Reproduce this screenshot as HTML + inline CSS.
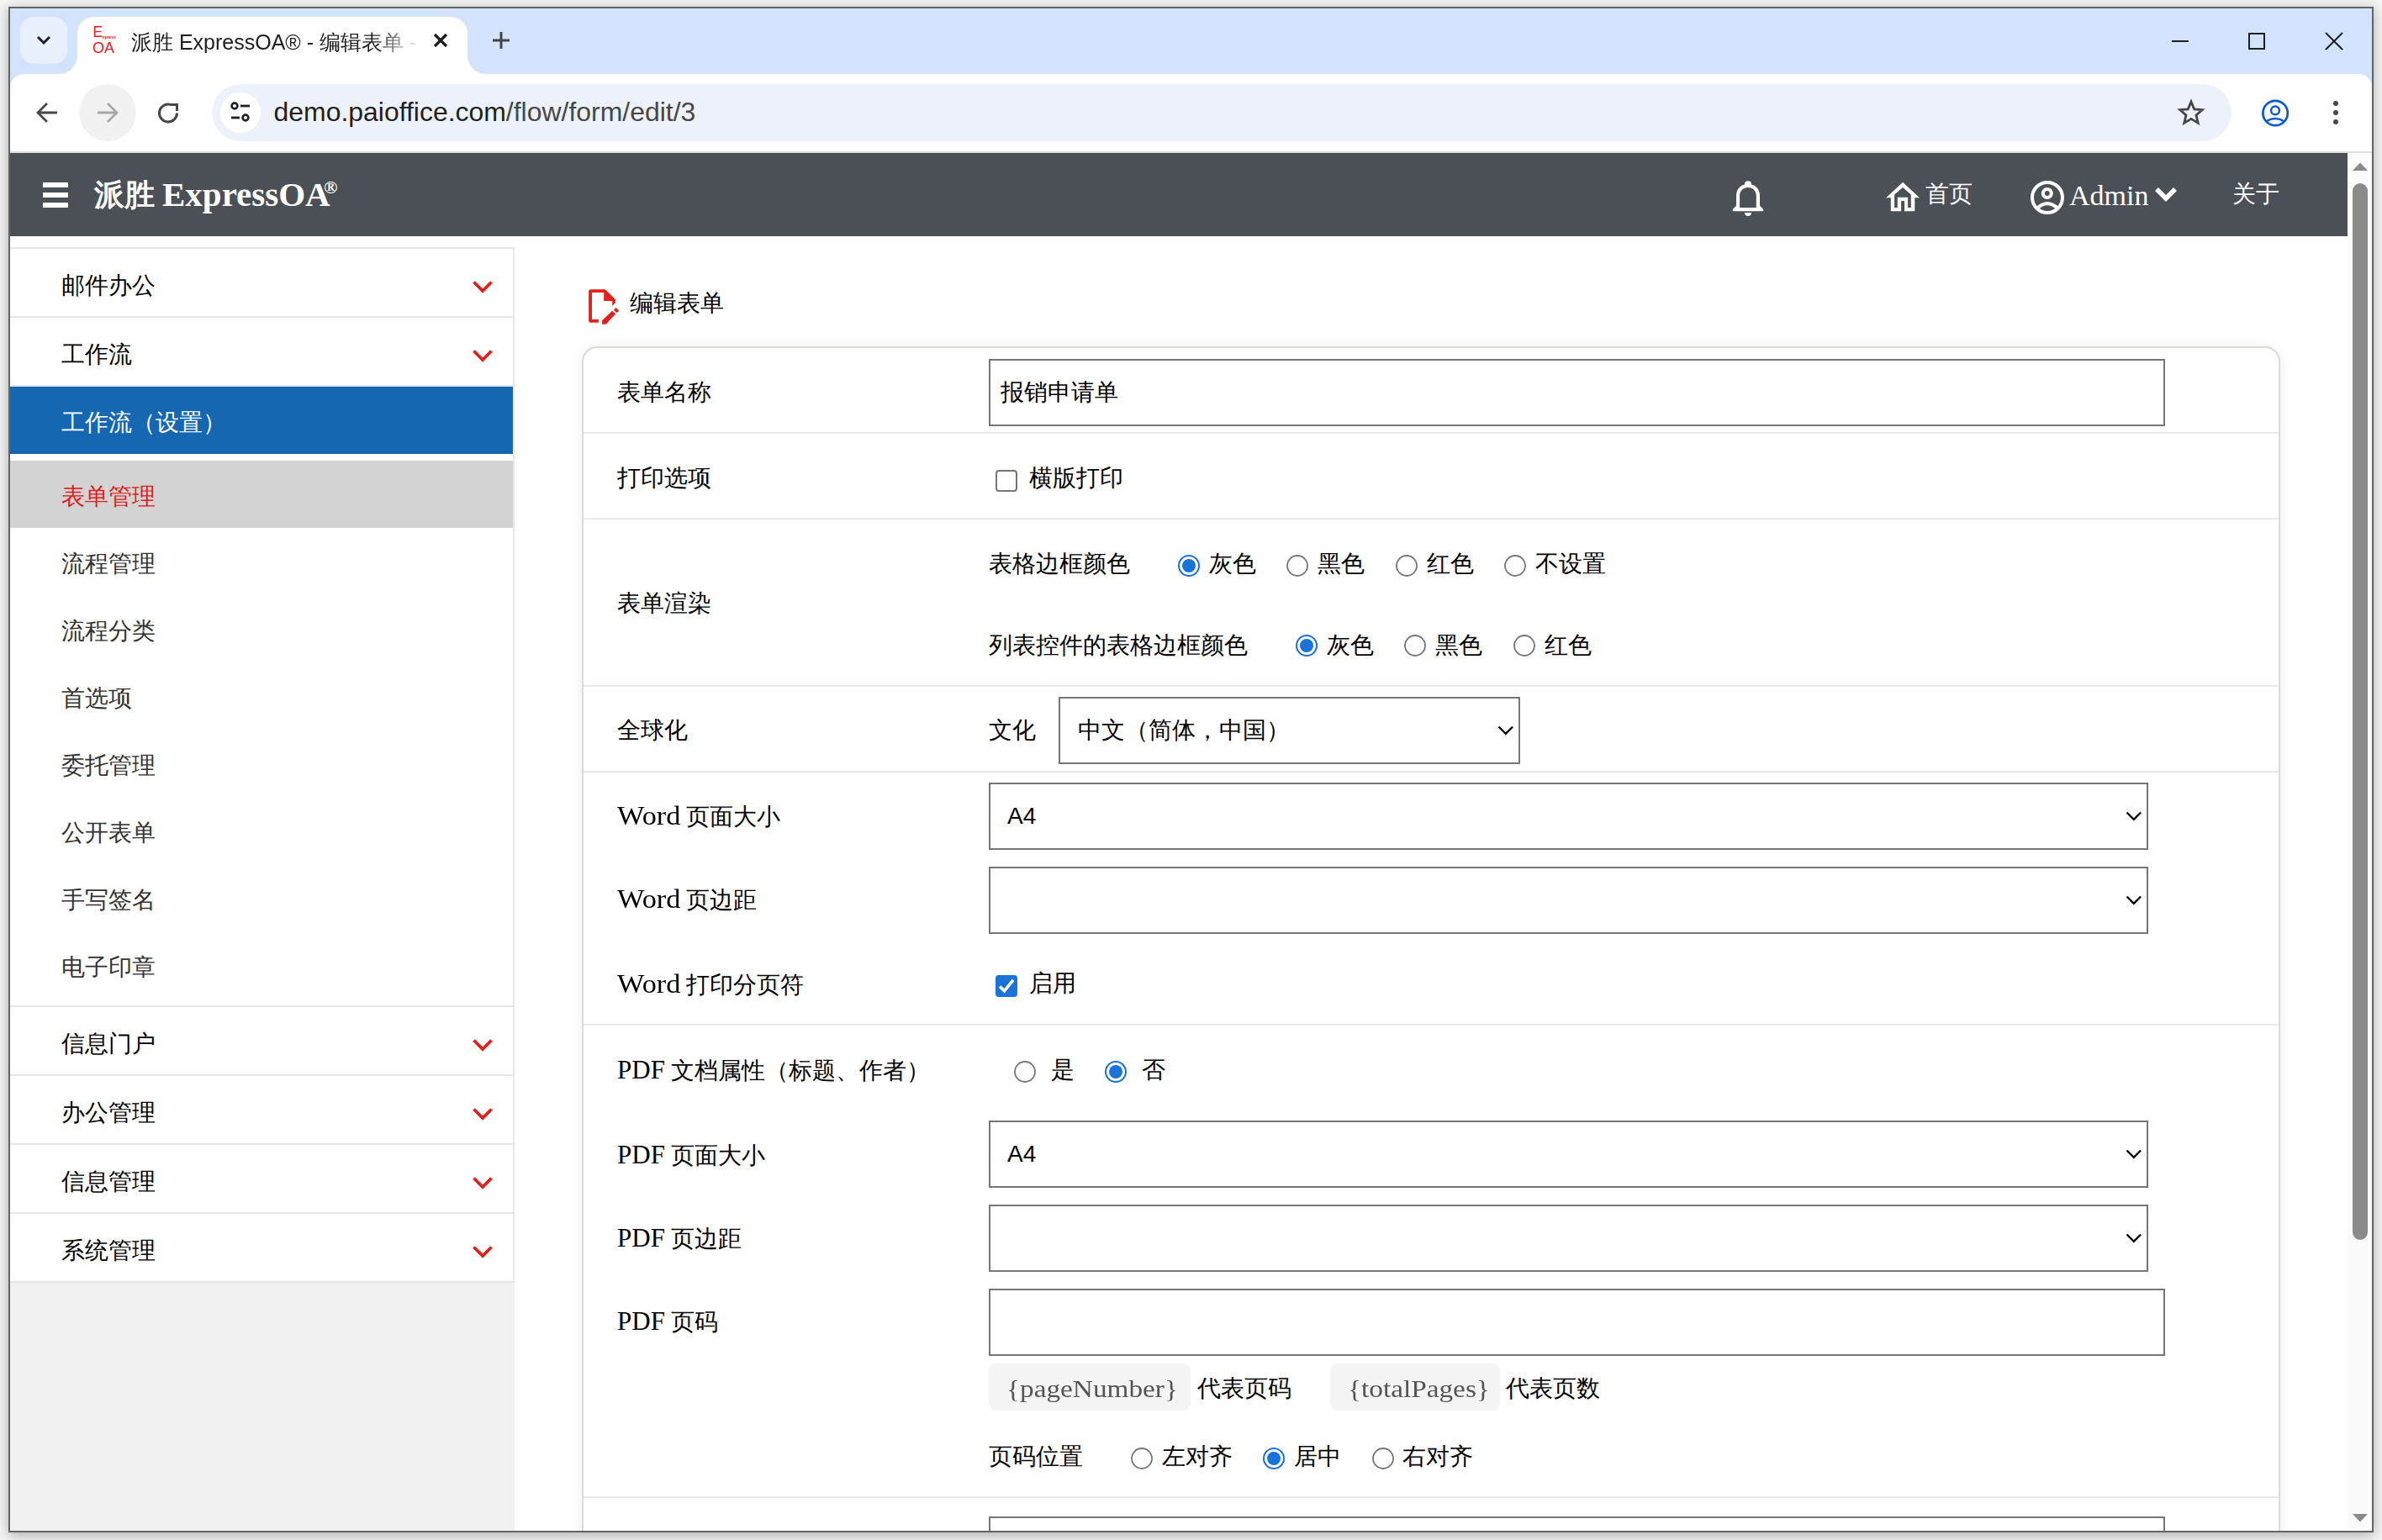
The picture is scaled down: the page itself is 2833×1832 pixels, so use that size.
<!DOCTYPE html>
<html><head><meta charset="utf-8"><title>派胜 ExpressOA® - 编辑表单</title>
<style>
html,body{margin:0;padding:0;}
body{width:2833px;height:1832px;overflow:hidden;position:relative;background:#f4f4f4;font-family:'Liberation Serif', serif;}
.r{position:absolute;box-sizing:border-box;}
.t{position:absolute;white-space:nowrap;}
.lw{font-size:31px;display:inline-block;transform:scaleX(1.108);transform-origin:0 0;margin-right:7px;}
</style></head><body>

<div class="r" style="left:10px;top:8px;width:2813px;height:1815px;border:2px solid #646464;background:#fff;box-shadow:0 3px 14px rgba(0,0,0,0.30);"></div>
<div class="r" style="left:12px;top:10px;width:2809px;height:100px;background:#d3e3fd;"></div>
<div class="r" style="left:24px;top:20px;width:56px;height:56px;background:#e9f0fd;border-radius:16px;"></div>
<svg class="r" style="left:40px;top:38px;" width="24" height="20" viewBox="0 0 24 20"><path d="M5 6 L12 13 L19 6" fill="none" stroke="#1f1f1f" stroke-width="3"/></svg>
<div class="r" style="left:92px;top:20px;width:464px;height:68px;background:#fff;border-radius:20px 20px 0 0;"></div>
<div class="r" style="left:70px;top:66px;width:22px;height:22px;background:radial-gradient(circle at 0 0, transparent 21.5px, #fff 22.5px);"></div>
<div class="r" style="left:556px;top:66px;width:22px;height:22px;background:radial-gradient(circle at 100% 0, transparent 21.5px, #fff 22.5px);"></div>
<div class="t" style="left:110.5px;top:30.4px;font-size:17.5px;line-height:17.5px;color:#e82020;font-family:'Liberation Sans', sans-serif;">E</div>
<div class="t" style="left:122px;top:41.5px;font-size:5px;line-height:5px;color:#e82020;font-family:'Liberation Sans', sans-serif;font-weight:bold;">xpress</div>
<div class="t" style="left:110px;top:47.7px;font-size:18px;line-height:18px;color:#e82020;font-family:'Liberation Sans', sans-serif;">OA</div>
<div class="t" style="left:156px;top:37.5px;font-size:25px;line-height:25px;color:#1f1f1f;font-family:'Liberation Sans', sans-serif;width:345px;overflow:hidden;-webkit-mask-image:linear-gradient(90deg,#000 0,#000 290px,rgba(0,0,0,0.15) 335px,transparent 345px);">派胜 ExpressOA® - 编辑表单 - 派胜</div>
<svg class="r" style="left:513px;top:37px;" width="22" height="22" viewBox="0 0 22 22"><path d="M4 4 L18 18 M18 4 L4 18" stroke="#1f1f1f" stroke-width="3.2"/></svg>
<svg class="r" style="left:585px;top:37px;" width="22" height="22" viewBox="0 0 22 22"><path d="M11 1 V21 M1 11 H21" stroke="#444" stroke-width="3"/></svg>
<div class="r" style="left:2583px;top:48px;width:20px;height:2px;background:#1f1f1f;"></div>
<div class="r" style="left:2674px;top:39px;width:20px;height:20px;border:2px solid #1f1f1f;"></div>
<svg class="r" style="left:2764px;top:37px;" width="24" height="24" viewBox="0 0 24 24"><path d="M2.5 2.5 L21.5 21.5 M21.5 2.5 L2.5 21.5" stroke="#1f1f1f" stroke-width="2" stroke-linecap="round"/></svg>
<div class="r" style="left:12px;top:88px;width:2809px;height:94px;background:#fff;border-radius:16px 16px 0 0;"></div>
<div class="r" style="left:12px;top:180px;width:2809px;height:2px;background:#dfe0dd;"></div>
<svg class="r" style="left:42px;top:120px;" width="28" height="28" viewBox="0 0 28 28"><path d="M26 14 H4 M14 3 L3 14 L14 25" fill="none" stroke="#474747" stroke-width="2.8"/></svg>
<div class="r" style="left:94px;top:100px;width:68px;height:68px;background:#f1f1f1;border-radius:50%;"></div>
<svg class="r" style="left:114px;top:120px;" width="28" height="28" viewBox="0 0 28 28"><path d="M2 14 H24 M14 3 L25 14 L14 25" fill="none" stroke="#a8a8a8" stroke-width="2.8"/></svg>
<svg class="r" style="left:186px;top:120px;" width="28" height="28" viewBox="0 0 28 28"><path d="M24.5 14.5 A10.5 10.5 0 1 1 15.8 4.2" fill="none" stroke="#474747" stroke-width="3"/><path d="M15.5 4.5 H24.5 V12" fill="none" stroke="#474747" stroke-width="3"/></svg>
<div class="r" style="left:252px;top:100px;width:2402px;height:68px;background:#edf2fa;border-radius:34px;"></div>
<div class="r" style="left:262px;top:110px;width:48px;height:48px;background:#fff;border-radius:50%;"></div>
<svg class="r" style="left:270px;top:118px;" width="32" height="32" viewBox="0 0 32 32"><circle cx="9" cy="8" r="3.4" fill="none" stroke="#1f1f1f" stroke-width="2.6"/><path d="M16 8 H27" stroke="#1f1f1f" stroke-width="2.8"/><circle cx="22" cy="22" r="3.4" fill="none" stroke="#1f1f1f" stroke-width="2.6"/><path d="M5 22 H15" stroke="#1f1f1f" stroke-width="2.8"/></svg>
<div class="t" style="left:325.5px;top:115px;font-size:31.95px;line-height:36px;font-family:'Liberation Sans', sans-serif;color:#1f1f1f;">demo.paioffice.com<span style="color:#474747">/flow/form/edit/3</span></div>
<svg class="r" style="left:2588px;top:117px;" width="36" height="34" viewBox="0 0 36 34"><path d="M18.00 4.00 L21.70 12.90 L31.31 13.67 L23.99 19.95 L26.23 29.33 L18.00 24.30 L9.77 29.33 L12.01 19.95 L4.69 13.67 L14.30 12.90 Z" fill="none" stroke="#474747" stroke-width="2.8" stroke-linejoin="miter" stroke-miterlimit="10"/></svg>
<svg class="r" style="left:2687px;top:115.5px;" width="38" height="38" viewBox="0 0 38 38"><circle cx="19.1" cy="18.5" r="14.7" fill="none" stroke="#0b57d0" stroke-width="2.7"/><circle cx="19" cy="15.4" r="4.9" fill="none" stroke="#0b57d0" stroke-width="2.4"/><path d="M8 28.5 Q19 21.5 30 28.5" fill="none" stroke="#0b57d0" stroke-width="2.6"/></svg>
<div class="r" style="left:2775px;top:120px;width:6px;height:6px;background:#474747;border-radius:50%;"></div>
<div class="r" style="left:2775px;top:131px;width:6px;height:6px;background:#474747;border-radius:50%;"></div>
<div class="r" style="left:2775px;top:142px;width:6px;height:6px;background:#474747;border-radius:50%;"></div>
<div style="position:absolute;left:0;top:0;width:2821px;height:1821px;overflow:hidden">
<div class="r" style="left:12px;top:182px;width:2780px;height:1639px;background:#fff;"></div>
<div class="r" style="left:12px;top:182px;width:2780px;height:99px;background:#4b5056;"></div>
<div class="r" style="left:51px;top:217px;width:30px;height:6px;background:#fff;"></div>
<div class="r" style="left:51px;top:229px;width:30px;height:6px;background:#fff;"></div>
<div class="r" style="left:51px;top:241px;width:30px;height:6px;background:#fff;"></div>
<div class="t" style="left:112px;top:214px;font-size:36px;line-height:36px;color:#fff;font-family:'Liberation Serif', serif;font-weight:bold;">派胜</div>
<div class="t" style="left:193px;top:210.7px;font-size:41px;line-height:41px;color:#fff;font-family:'Liberation Serif', serif;font-weight:bold;">ExpressOA</div>
<div class="t" style="left:385px;top:212px;font-size:22px;line-height:22px;color:#fff;font-family:'Liberation Serif', serif;font-weight:bold;">®</div>
<svg class="r" style="left:2058px;top:210px;" width="42" height="48" viewBox="0 0 42 48"><path d="M16.9 9.4 A4.1 4.1 0 0 1 25.1 9.4 C31.5 11 35 16 35 23 V34.7 L39.2 39 V41.2 H2.8 V39 L7 34.7 V23 C7 16 10.5 11 16.9 9.4 Z M11.1 36.9 H30.8 V23 C30.8 17 26.5 13.1 21 13.1 C15.5 13.1 11.1 17 11.1 23 Z" fill="#fff" fill-rule="evenodd"/><path d="M16.9 42.9 H25.1 A4.1 4.1 0 0 1 16.9 42.9 Z" fill="#fff"/></svg>
<svg class="r" style="left:2235px;top:205px;" width="60" height="60" viewBox="0 0 60 60"><path d="M28.05 11.7 L47.9 30.2 H42.3 V46.2 H30 V34.1 H26.1 V46.2 H13.8 V30.2 H8.2 Z M18.1 41.9 V26.5 L28.05 17.9 L37.8 26.5 V41.9 H34.1 V29.8 H21.8 V41.9 Z" fill="#fff" fill-rule="evenodd"/></svg>
<div class="t" style="left:2290px;top:217px;font-size:28px;line-height:28px;color:#fff;font-family:'Liberation Serif', serif;">首页</div>
<svg class="r" style="left:2413px;top:213px;" width="44" height="44" viewBox="0 0 44 44"><circle cx="22" cy="22" r="18" fill="none" stroke="#fff" stroke-width="4"/><circle cx="21.8" cy="17" r="4.95" fill="none" stroke="#fff" stroke-width="4.1"/><path d="M9.5 35 Q22 23.2 34.5 35" fill="none" stroke="#fff" stroke-width="4"/></svg>
<div class="t" style="left:2461px;top:215.5px;font-size:34px;line-height:34px;color:#fff;font-family:'Liberation Serif', serif;">Admin</div>
<svg class="r" style="left:2561px;top:220px;" width="30" height="22" viewBox="0 0 30 22"><path d="M4 5 L15 16 L26 5" fill="none" stroke="#fff" stroke-width="5.5"/></svg>
<div class="t" style="left:2655px;top:217px;font-size:28px;line-height:28px;color:#fff;font-family:'Liberation Serif', serif;">关于</div>
<div class="r" style="left:2792px;top:182px;width:29px;height:1639px;background:#fbfbfb;"></div>
<svg class="r" style="left:2796px;top:191px;" width="22" height="13" viewBox="0 0 22 13"><path d="M2 12 L11 2.5 L20 12 Z" fill="#8a8a8a"/></svg>
<div class="r" style="left:2798px;top:218px;width:18px;height:1257px;background:#8b8b8b;border-radius:9px;"></div>
<svg class="r" style="left:2796px;top:1800px;" width="22" height="13" viewBox="0 0 22 13"><path d="M2 1 L11 10.5 L20 1 Z" fill="#8a8a8a"/></svg>
<div class="r" style="left:12px;top:1526px;width:600px;height:295px;background:#f0f0f0;"></div>
<div class="r" style="left:12px;top:294px;width:600px;height:1232px;border-top:2px solid #e6e6e6;border-right:2px solid #e6e6e6;"></div>
<div class="t" style="left:73px;top:325.5px;font-size:28px;line-height:28px;color:#000;font-family:'Liberation Serif', serif;">邮件办公</div>
<svg class="r" style="left:560px;top:332px;" width="28" height="20" viewBox="0 0 28 20"><path d="M3.5 3.5 L14 14 L24.5 3.5" fill="none" stroke="#e0201a" stroke-width="3.8"/></svg>
<div class="r" style="left:12px;top:376px;width:598px;height:2px;background:#e6e6e6;"></div>
<div class="t" style="left:73px;top:407.5px;font-size:28px;line-height:28px;color:#000;font-family:'Liberation Serif', serif;">工作流</div>
<svg class="r" style="left:560px;top:414px;" width="28" height="20" viewBox="0 0 28 20"><path d="M3.5 3.5 L14 14 L24.5 3.5" fill="none" stroke="#e0201a" stroke-width="3.8"/></svg>
<div class="r" style="left:12px;top:458px;width:598px;height:2px;background:#e6e6e6;"></div>
<div class="r" style="left:12px;top:460px;width:598px;height:80px;background:#1667b2;"></div>
<div class="t" style="left:73px;top:489px;font-size:28px;line-height:28px;color:#fff;font-family:'Liberation Serif', serif;">工作流（设置）</div>
<div class="r" style="left:12px;top:548px;width:598px;height:80px;background:#d3d3d3;"></div>
<div class="t" style="left:73px;top:577px;font-size:28px;line-height:28px;color:#e0201a;font-family:'Liberation Serif', serif;">表单管理</div>
<div class="t" style="left:73px;top:657px;font-size:28px;line-height:28px;color:#333;font-family:'Liberation Serif', serif;">流程管理</div>
<div class="t" style="left:73px;top:737px;font-size:28px;line-height:28px;color:#333;font-family:'Liberation Serif', serif;">流程分类</div>
<div class="t" style="left:73px;top:817px;font-size:28px;line-height:28px;color:#333;font-family:'Liberation Serif', serif;">首选项</div>
<div class="t" style="left:73px;top:897px;font-size:28px;line-height:28px;color:#333;font-family:'Liberation Serif', serif;">委托管理</div>
<div class="t" style="left:73px;top:977px;font-size:28px;line-height:28px;color:#333;font-family:'Liberation Serif', serif;">公开表单</div>
<div class="t" style="left:73px;top:1057px;font-size:28px;line-height:28px;color:#333;font-family:'Liberation Serif', serif;">手写签名</div>
<div class="t" style="left:73px;top:1137px;font-size:28px;line-height:28px;color:#333;font-family:'Liberation Serif', serif;">电子印章</div>
<div class="r" style="left:12px;top:1196px;width:598px;height:2px;background:#e6e6e6;"></div>
<div class="t" style="left:73px;top:1227.5px;font-size:28px;line-height:28px;color:#000;font-family:'Liberation Serif', serif;">信息门户</div>
<svg class="r" style="left:560px;top:1234px;" width="28" height="20" viewBox="0 0 28 20"><path d="M3.5 3.5 L14 14 L24.5 3.5" fill="none" stroke="#e0201a" stroke-width="3.8"/></svg>
<div class="r" style="left:12px;top:1278px;width:598px;height:2px;background:#e6e6e6;"></div>
<div class="t" style="left:73px;top:1309.5px;font-size:28px;line-height:28px;color:#000;font-family:'Liberation Serif', serif;">办公管理</div>
<svg class="r" style="left:560px;top:1316px;" width="28" height="20" viewBox="0 0 28 20"><path d="M3.5 3.5 L14 14 L24.5 3.5" fill="none" stroke="#e0201a" stroke-width="3.8"/></svg>
<div class="r" style="left:12px;top:1360px;width:598px;height:2px;background:#e6e6e6;"></div>
<div class="t" style="left:73px;top:1391.5px;font-size:28px;line-height:28px;color:#000;font-family:'Liberation Serif', serif;">信息管理</div>
<svg class="r" style="left:560px;top:1398px;" width="28" height="20" viewBox="0 0 28 20"><path d="M3.5 3.5 L14 14 L24.5 3.5" fill="none" stroke="#e0201a" stroke-width="3.8"/></svg>
<div class="r" style="left:12px;top:1442px;width:598px;height:2px;background:#e6e6e6;"></div>
<div class="t" style="left:73px;top:1473.5px;font-size:28px;line-height:28px;color:#000;font-family:'Liberation Serif', serif;">系统管理</div>
<svg class="r" style="left:560px;top:1480px;" width="28" height="20" viewBox="0 0 28 20"><path d="M3.5 3.5 L14 14 L24.5 3.5" fill="none" stroke="#e0201a" stroke-width="3.8"/></svg>
<div class="r" style="left:12px;top:1524px;width:598px;height:2px;background:#e6e6e6;"></div>
<svg class="r" style="left:694px;top:338px" width="50" height="54" viewBox="0 0 1426 1540"><path fill="#e5201b" d="M240 175 H735 L1080 520 V630 L975 745 V570 H690 V285 H285 V1195 H510 V1305 H240 Q175 1305 175 1240 V240 Q175 175 240 175 Z M630 1235 L975 905 L1085 1015 L760 1365 H630 Z M1025 875 L1095 800 L1200 900 L1130 975 Z"/></svg>
<div class="t" style="left:749px;top:347px;font-size:28px;line-height:28px;color:#000;font-family:'Liberation Serif', serif;">编辑表单</div>
<div class="r" style="left:692px;top:412px;width:2020px;height:1500px;border:2px solid #dddbd7;border-radius:18px;box-shadow:0 0 14px rgba(0,0,0,0.08);background:#fff;"></div>
<div class="t" style="left:734px;top:453px;font-size:28px;line-height:28px;color:#000;font-family:'Liberation Serif', serif;">表单名称</div>
<div class="r" style="left:1176px;top:427px;width:1399px;height:80px;border:2px solid #767676;background:#fff;"></div>
<div class="t" style="left:1190px;top:453px;font-size:28px;line-height:28px;color:#000;font-family:'Liberation Sans', sans-serif;">报销申请单</div>
<div class="r" style="left:694px;top:514px;width:2016px;height:2px;background:#e8e8e8;"></div>
<div class="t" style="left:734px;top:555px;font-size:28px;line-height:28px;color:#000;font-family:'Liberation Serif', serif;">打印选项</div>
<div class="r" style="left:1184px;top:559px;width:26px;height:26px;border:2px solid #767676;border-radius:4px;background:#fff;"></div>
<div class="t" style="left:1224px;top:555px;font-size:28px;line-height:28px;color:#000;font-family:'Liberation Serif', serif;">横版打印</div>
<div class="r" style="left:694px;top:616px;width:2016px;height:2px;background:#e8e8e8;"></div>
<div class="t" style="left:734px;top:704px;font-size:28px;line-height:28px;color:#000;font-family:'Liberation Serif', serif;">表单渲染</div>
<div class="t" style="left:1176px;top:657px;font-size:28px;line-height:28px;color:#000;font-family:'Liberation Serif', serif;">表格边框颜色</div>
<svg class="r" style="left:1401px;top:660px;" width="26" height="26" viewBox="0 0 26 26"><circle cx="13" cy="13" r="12" fill="none" stroke="#1a73d9" stroke-width="2"/><circle cx="13" cy="13" r="8" fill="#1a73d9"/></svg>
<div class="t" style="left:1438px;top:657px;font-size:28px;line-height:28px;color:#000;font-family:'Liberation Serif', serif;">灰色</div>
<svg class="r" style="left:1530px;top:660px;" width="26" height="26" viewBox="0 0 26 26"><circle cx="13" cy="13" r="12" fill="none" stroke="#767676" stroke-width="1.8"/></svg>
<div class="t" style="left:1567px;top:657px;font-size:28px;line-height:28px;color:#000;font-family:'Liberation Serif', serif;">黑色</div>
<svg class="r" style="left:1660px;top:660px;" width="26" height="26" viewBox="0 0 26 26"><circle cx="13" cy="13" r="12" fill="none" stroke="#767676" stroke-width="1.8"/></svg>
<div class="t" style="left:1697px;top:657px;font-size:28px;line-height:28px;color:#000;font-family:'Liberation Serif', serif;">红色</div>
<svg class="r" style="left:1789px;top:660px;" width="26" height="26" viewBox="0 0 26 26"><circle cx="13" cy="13" r="12" fill="none" stroke="#767676" stroke-width="1.8"/></svg>
<div class="t" style="left:1826px;top:657px;font-size:28px;line-height:28px;color:#000;font-family:'Liberation Serif', serif;">不设置</div>
<div class="t" style="left:1176px;top:754px;font-size:28px;line-height:28px;color:#000;font-family:'Liberation Serif', serif;">列表控件的表格边框颜色</div>
<svg class="r" style="left:1541px;top:755px;" width="26" height="26" viewBox="0 0 26 26"><circle cx="13" cy="13" r="12" fill="none" stroke="#1a73d9" stroke-width="2"/><circle cx="13" cy="13" r="8" fill="#1a73d9"/></svg>
<div class="t" style="left:1578px;top:754px;font-size:28px;line-height:28px;color:#000;font-family:'Liberation Serif', serif;">灰色</div>
<svg class="r" style="left:1670px;top:755px;" width="26" height="26" viewBox="0 0 26 26"><circle cx="13" cy="13" r="12" fill="none" stroke="#767676" stroke-width="1.8"/></svg>
<div class="t" style="left:1707px;top:754px;font-size:28px;line-height:28px;color:#000;font-family:'Liberation Serif', serif;">黑色</div>
<svg class="r" style="left:1800px;top:755px;" width="26" height="26" viewBox="0 0 26 26"><circle cx="13" cy="13" r="12" fill="none" stroke="#767676" stroke-width="1.8"/></svg>
<div class="t" style="left:1837px;top:754px;font-size:28px;line-height:28px;color:#000;font-family:'Liberation Serif', serif;">红色</div>
<div class="r" style="left:694px;top:815px;width:2016px;height:2px;background:#e8e8e8;"></div>
<div class="t" style="left:734px;top:855px;font-size:28px;line-height:28px;color:#000;font-family:'Liberation Serif', serif;">全球化</div>
<div class="t" style="left:1176px;top:855px;font-size:28px;line-height:28px;color:#000;font-family:'Liberation Serif', serif;">文化</div>
<div class="r" style="left:1259px;top:829px;width:549px;height:80px;border:2px solid #767676;background:#fff;"></div>
<div class="t" style="left:1282px;top:855px;font-size:28px;line-height:28px;color:#000;font-family:'Liberation Sans', sans-serif;">中文（简体，中国）</div>
<svg class="r" style="left:1781px;top:862px;" width="22" height="14" viewBox="0 0 22 14"><path d="M1.5 2.5 L9.8 10.8 L18.1 2.5" fill="none" stroke="#000" stroke-width="2.3"/></svg>
<div class="r" style="left:694px;top:917px;width:2016px;height:2px;background:#e8e8e8;"></div>
<div class="t" style="left:734px;top:957px;font-size:28px;line-height:28px;color:#000;font-family:'Liberation Serif', serif;"><span class="lw">Word</span> 页面大小</div>
<div class="r" style="left:1176px;top:931px;width:1379px;height:80px;border:2px solid #767676;background:#fff;"></div>
<div class="t" style="left:1198px;top:957px;font-size:28px;line-height:28px;color:#000;font-family:'Liberation Sans', sans-serif;">A4</div>
<svg class="r" style="left:2528px;top:964px;" width="22" height="14" viewBox="0 0 22 14"><path d="M1.5 2.5 L9.8 10.8 L18.1 2.5" fill="none" stroke="#000" stroke-width="2.3"/></svg>
<div class="t" style="left:734px;top:1056px;font-size:28px;line-height:28px;color:#000;font-family:'Liberation Serif', serif;"><span class="lw">Word</span> 页边距</div>
<div class="r" style="left:1176px;top:1031px;width:1379px;height:80px;border:2px solid #767676;background:#fff;"></div>
<svg class="r" style="left:2528px;top:1064px;" width="22" height="14" viewBox="0 0 22 14"><path d="M1.5 2.5 L9.8 10.8 L18.1 2.5" fill="none" stroke="#000" stroke-width="2.3"/></svg>
<div class="t" style="left:734px;top:1157px;font-size:28px;line-height:28px;color:#000;font-family:'Liberation Serif', serif;"><span class="lw">Word</span> 打印分页符</div>
<svg class="r" style="left:1184px;top:1160px;" width="26" height="26" viewBox="0 0 26 26"><rect x="0" y="0" width="26" height="26" rx="4" fill="#1a73d9"/><path d="M5 13.5 L10.5 18.8 L21 5.8" fill="none" stroke="#fff" stroke-width="3.6"/></svg>
<div class="t" style="left:1224px;top:1156px;font-size:28px;line-height:28px;color:#000;font-family:'Liberation Serif', serif;">启用</div>
<div class="r" style="left:694px;top:1218px;width:2016px;height:2px;background:#e8e8e8;"></div>
<div class="t" style="left:734px;top:1259px;font-size:28px;line-height:28px;color:#000;font-family:'Liberation Serif', serif;"><span style="font-size:31px">PDF</span> 文档属性（标题、作者）</div>
<svg class="r" style="left:1206px;top:1262px;" width="26" height="26" viewBox="0 0 26 26"><circle cx="13" cy="13" r="12" fill="none" stroke="#767676" stroke-width="1.8"/></svg>
<div class="t" style="left:1250px;top:1259px;font-size:28px;line-height:28px;color:#000;font-family:'Liberation Serif', serif;">是</div>
<svg class="r" style="left:1314px;top:1262px;" width="26" height="26" viewBox="0 0 26 26"><circle cx="13" cy="13" r="12" fill="none" stroke="#1a73d9" stroke-width="2"/><circle cx="13" cy="13" r="8" fill="#1a73d9"/></svg>
<div class="t" style="left:1358px;top:1259px;font-size:28px;line-height:28px;color:#000;font-family:'Liberation Serif', serif;">否</div>
<div class="t" style="left:734px;top:1360px;font-size:28px;line-height:28px;color:#000;font-family:'Liberation Serif', serif;"><span style="font-size:31px">PDF</span> 页面大小</div>
<div class="r" style="left:1176px;top:1333px;width:1379px;height:80px;border:2px solid #767676;background:#fff;"></div>
<div class="t" style="left:1198px;top:1359px;font-size:28px;line-height:28px;color:#000;font-family:'Liberation Sans', sans-serif;">A4</div>
<svg class="r" style="left:2528px;top:1366px;" width="22" height="14" viewBox="0 0 22 14"><path d="M1.5 2.5 L9.8 10.8 L18.1 2.5" fill="none" stroke="#000" stroke-width="2.3"/></svg>
<div class="t" style="left:734px;top:1459px;font-size:28px;line-height:28px;color:#000;font-family:'Liberation Serif', serif;"><span style="font-size:31px">PDF</span> 页边距</div>
<div class="r" style="left:1176px;top:1433px;width:1379px;height:80px;border:2px solid #767676;background:#fff;"></div>
<svg class="r" style="left:2528px;top:1466px;" width="22" height="14" viewBox="0 0 22 14"><path d="M1.5 2.5 L9.8 10.8 L18.1 2.5" fill="none" stroke="#000" stroke-width="2.3"/></svg>
<div class="t" style="left:734px;top:1558px;font-size:28px;line-height:28px;color:#000;font-family:'Liberation Serif', serif;"><span style="font-size:31px">PDF</span> 页码</div>
<div class="r" style="left:1176px;top:1533px;width:1399px;height:80px;border:2px solid #767676;background:#fff;"></div>
<div class="r" style="left:1176px;top:1622px;width:240px;height:56px;background:#f4f4f4;border-radius:9px;"></div>
<div class="t" style="left:1197px;top:1637px;font-size:30px;line-height:30px;color:#555;font-family:'Liberation Serif', serif;"><span style="display:inline-block;transform:scaleX(1.11);transform-origin:0 0">{pageNumber}</span></div>
<div class="t" style="left:1424px;top:1638px;font-size:28px;line-height:28px;color:#000;font-family:'Liberation Serif', serif;">代表页码</div>
<div class="r" style="left:1582px;top:1622px;width:202px;height:56px;background:#f4f4f4;border-radius:9px;"></div>
<div class="t" style="left:1603px;top:1637px;font-size:30px;line-height:30px;color:#555;font-family:'Liberation Serif', serif;"><span style="display:inline-block;transform:scaleX(1.11);transform-origin:0 0">{totalPages}</span></div>
<div class="t" style="left:1791px;top:1638px;font-size:28px;line-height:28px;color:#000;font-family:'Liberation Serif', serif;">代表页数</div>
<div class="t" style="left:1176px;top:1719px;font-size:28px;line-height:28px;color:#000;font-family:'Liberation Serif', serif;">页码位置</div>
<svg class="r" style="left:1345px;top:1722px;" width="26" height="26" viewBox="0 0 26 26"><circle cx="13" cy="13" r="12" fill="none" stroke="#767676" stroke-width="1.8"/></svg>
<div class="t" style="left:1382px;top:1719px;font-size:28px;line-height:28px;color:#000;font-family:'Liberation Serif', serif;">左对齐</div>
<svg class="r" style="left:1502px;top:1722px;" width="26" height="26" viewBox="0 0 26 26"><circle cx="13" cy="13" r="12" fill="none" stroke="#1a73d9" stroke-width="2"/><circle cx="13" cy="13" r="8" fill="#1a73d9"/></svg>
<div class="t" style="left:1539px;top:1719px;font-size:28px;line-height:28px;color:#000;font-family:'Liberation Serif', serif;">居中</div>
<svg class="r" style="left:1632px;top:1722px;" width="26" height="26" viewBox="0 0 26 26"><circle cx="13" cy="13" r="12" fill="none" stroke="#767676" stroke-width="1.8"/></svg>
<div class="t" style="left:1668px;top:1719px;font-size:28px;line-height:28px;color:#000;font-family:'Liberation Serif', serif;">右对齐</div>
<div class="r" style="left:694px;top:1780px;width:2016px;height:2px;background:#e8e8e8;"></div>
<div class="r" style="left:1176px;top:1804px;width:1399px;height:80px;border:2px solid #767676;background:#fff;"></div>
</div>
</body></html>
